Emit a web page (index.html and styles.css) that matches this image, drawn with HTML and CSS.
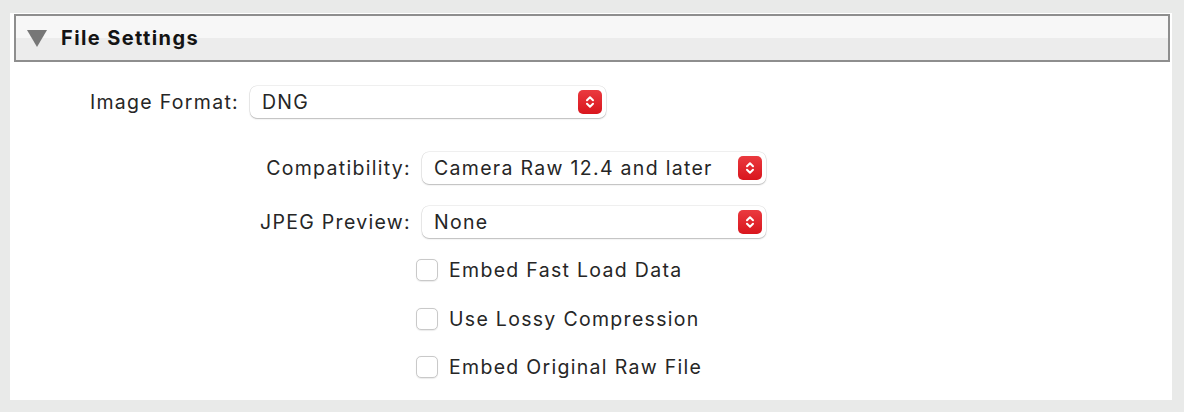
FILE: index.html
```html
<!DOCTYPE html>
<html>
<head>
<meta charset="utf-8">
<link rel="stylesheet" href="styles.css">
</head>
<body>
<div class="panel">
  <div class="header">
    <span class="tri"></span>
    <span class="title">File Settings</span>
  </div>
  <div class="body">
    <div class="row row-main">
      <span class="label label-main">Image Format:</span>
      <div class="select select-main"><span class="val">DNG</span><span class="btn"><svg width="12" height="16" viewBox="0 0 12 16"><path d="M3 6.2 L6 3.2 L9 6.2 M3 9.8 L6 12.8 L9 9.8" fill="none" stroke="#fff" stroke-width="2" stroke-linecap="round" stroke-linejoin="round"/></svg></span></div>
    </div>
    <div class="sub">
      <div class="row">
        <span class="label label-sub">Compatibility:</span>
        <div class="select select-sub"><span class="val">Camera Raw 12.4 and later</span><span class="btn"><svg width="12" height="16" viewBox="0 0 12 16"><path d="M3 6.2 L6 3.2 L9 6.2 M3 9.8 L6 12.8 L9 9.8" fill="none" stroke="#fff" stroke-width="2" stroke-linecap="round" stroke-linejoin="round"/></svg></span></div>
      </div>
      <div class="row">
        <span class="label label-sub">JPEG Preview:</span>
        <div class="select select-sub"><span class="val">None</span><span class="btn"><svg width="12" height="16" viewBox="0 0 12 16"><path d="M3 6.2 L6 3.2 L9 6.2 M3 9.8 L6 12.8 L9 9.8" fill="none" stroke="#fff" stroke-width="2" stroke-linecap="round" stroke-linejoin="round"/></svg></span></div>
      </div>
    </div>
    <div class="checks">
      <label class="check"><span class="box"></span><span>Embed Fast Load Data</span></label>
      <label class="check"><span class="box"></span><span>Use Lossy Compression</span></label>
      <label class="check"><span class="box"></span><span>Embed Original Raw File</span></label>
    </div>
  </div>
</div>
</body>
</html>
```
FILE: styles.css
```css
html, body {
  margin: 0;
  padding: 0;
  background: #e9eae9;
  font-family: Inter, "Liberation Sans", Arial, sans-serif;
  color: #262626;
}
.panel {
  margin: 13px 0 0 10px;
  width: 1162px;
  height: 387px;
  background: #fff;
  box-sizing: border-box;
  padding: 1px 2px 0 4px;
}
.header {
  height: 48px;
  box-sizing: border-box;
  border: 2px solid #8e8e8e;
  background: linear-gradient(to bottom, #f7f7f7 0, #f7f7f7 50%, #ececec 50%, #ececec 100%);
  display: flex;
  align-items: center;
  padding-left: 11px;
}
.tri {
  width: 0;
  height: 0;
  border-left: 10px solid transparent;
  border-right: 10px solid transparent;
  border-top: 17px solid #777;
  margin-right: 14px;
  margin-top: 1px;
}
.title {
  font-weight: 700;
  font-size: 20px;
  color: #141414;
  letter-spacing: 1.4px;
}
.body {
  padding-top: 24px;
}
.row {
  display: flex;
  align-items: center;
  height: 32px;
}
.label {
  font-size: 19.5px;
  letter-spacing: 1.3px;
  text-align: right;
  box-sizing: border-box;
}
.label-main {
  width: 225px;
  margin-right: 10px;
}
.label-sub {
  width: 397px;
  margin-right: 10px;
}
.select {
  height: 32px;
  box-sizing: border-box;
  background: #fff;
  border-radius: 7px;
  box-shadow: 0 0 0 0.5px rgba(0,0,0,0.12), 0 1px 1.5px rgba(0,0,0,0.22);
  display: flex;
  align-items: center;
  justify-content: space-between;
  padding: 0 4px 0 12px;
  font-size: 19.5px;
  letter-spacing: 1.3px;
}
.select-main { width: 356px; margin-left: 1px; }
.select-sub { width: 344px; margin-left: 1px; }
.btn {
  width: 24px;
  height: 24px;
  border-radius: 5px;
  background: linear-gradient(to bottom, #ea3a3f, #d9151d);
  display: flex;
  align-items: center;
  justify-content: center;
}
.btn svg { display: block; }
.sub {
  margin-top: 34px;
  display: flex;
  flex-direction: column;
  gap: 22px;
}
.checks {
  display: flex;
  flex-direction: column;
  gap: 26.5px;
  padding-left: 402px;
  margin-top: 21px;
}
.check {
  display: flex;
  align-items: center;
  height: 22px;
  font-size: 19.5px;
  letter-spacing: 1.3px;
}
.box {
  width: 22px;
  height: 22px;
  box-sizing: border-box;
  border: 1px solid #c9c9c9;
  border-radius: 5px;
  background: #fff;
  box-shadow: 0 0.5px 1px rgba(0,0,0,0.08);
  margin-right: 11px;
}
```
